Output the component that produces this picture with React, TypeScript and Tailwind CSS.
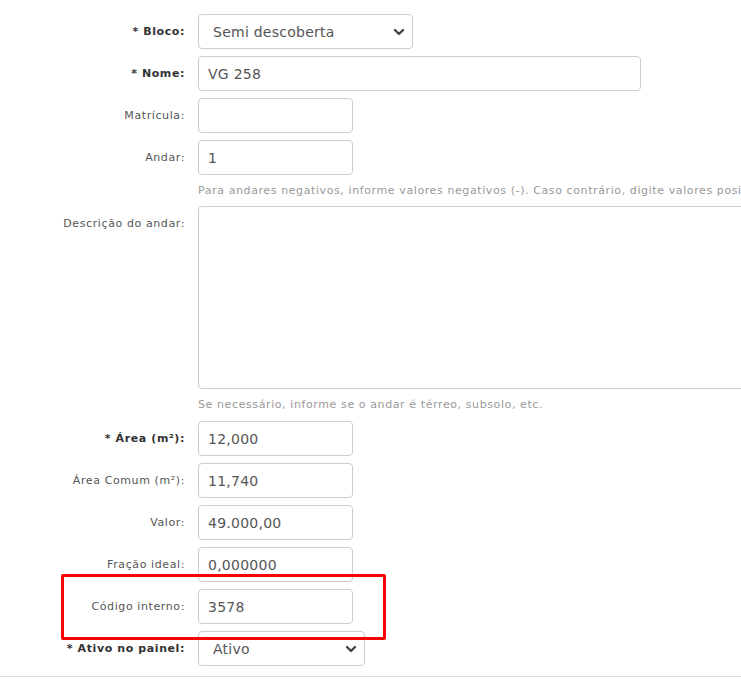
import type { ReactNode } from "react";

const font = { fontFamily: '"DejaVu Sans", Verdana, sans-serif' };

function Chevron() {
  return (
    <svg
      className="pointer-events-none absolute top-1/2 right-[8px] h-[10px] w-[12px] -translate-y-1/2"
      viewBox="0 0 12 10"
      fill="none"
      stroke="#444"
      strokeWidth={2.4}
      strokeLinecap="round"
      strokeLinejoin="round"
    >
      <path d="M2 3l4 4 4-4" />
    </svg>
  );
}

function Row({ label, required, children }: { label: string; required?: boolean; children: ReactNode }) {
  return (
    <div className="flex items-start">
      <div
        className={
          "flex h-[35px] w-[198px] shrink-0 items-center justify-end pt-[2px] pr-[13px] text-[11px] tracking-[0.6px] whitespace-nowrap " +
          (required ? "font-bold text-[#333]" : "text-[#555]")
        }
      >
        {required ? `* ${label}` : label}
      </div>
      {children}
    </div>
  );
}

function Input({ value, width }: { value?: string; width: string }) {
  return (
    <input
      readOnly
      value={value ?? ""}
      style={font}
      className={`${width} h-[35px] rounded-[4px] border border-[#ccc] bg-white px-[9px] pt-[1px] text-[14px] tracking-[0.25px] text-[#555] outline-none`}
    />
  );
}

function Select({ value, width }: { value: string; width: string }) {
  return (
    <div className={`relative ${width} h-[35px]`}>
      <select
        style={font}
        defaultValue={value}
        className="h-full w-full appearance-none rounded-[4px] border border-[#ccc] bg-white pt-[1px] pr-[28px] pl-[14px] text-[14px] tracking-[0.25px] text-[#555] outline-none"
      >
        <option>{value}</option>
      </select>
      <Chevron />
    </div>
  );
}

function Hint({ children, lh }: { children: ReactNode; lh: string }) {
  return (
    <div className={`pl-[198px] text-[11px] tracking-[0.6px] ${lh} whitespace-nowrap text-[#999]`}>{children}</div>
  );
}

export default function App() {
  return (
    <div style={font} className="relative h-[682px] w-full overflow-hidden bg-white">
      <div className="flex flex-col gap-[7px] pt-[14px]">
        <Row label="Bloco:" required>
          <Select value="Semi descoberta" width="w-[215px]" />
        </Row>
        <Row label="Nome:" required>
          <Input value="VG 258" width="w-[443px]" />
        </Row>
        <Row label="Matrícula:">
          <Input width="w-[155px]" />
        </Row>
        <Row label="Andar:">
          <Input value="1" width="w-[155px]" />
        </Row>
        <Hint lh="leading-[17px]">
          Para andares negativos, informe valores negativos (-). Caso contrário, digite valores positivos.
        </Hint>
        <Row label="Descrição do andar:">
          <textarea
            readOnly
            className="h-[183px] w-[600px] shrink-0 resize-none rounded-[4px] border border-[#ccc] bg-white outline-none"
          />
        </Row>
        <Hint lh="leading-[18px]">Se necessário, informe se o andar é térreo, subsolo, etc.</Hint>
        <Row label="Área (m²):" required>
          <Input value="12,000" width="w-[155px]" />
        </Row>
        <Row label="Área Comum (m²):">
          <Input value="11,740" width="w-[155px]" />
        </Row>
        <Row label="Valor:">
          <Input value="49.000,00" width="w-[155px]" />
        </Row>
        <Row label="Fração ideal:">
          <Input value="0,000000" width="w-[155px]" />
        </Row>
        <Row label="Código interno:">
          <Input value="3578" width="w-[155px]" />
        </Row>
        <Row label="Ativo no painel:" required>
          <Select value="Ativo" width="w-[167px]" />
        </Row>
      </div>
      <div className="mt-[10px] border-t border-[#ddd]" />

      {/* highlight annotation */}
      <div className="pointer-events-none absolute top-[574px] left-[61px] h-[66px] w-[325px] rounded-[2px] border-[3px] border-[#f00]" />
    </div>
  );
}
